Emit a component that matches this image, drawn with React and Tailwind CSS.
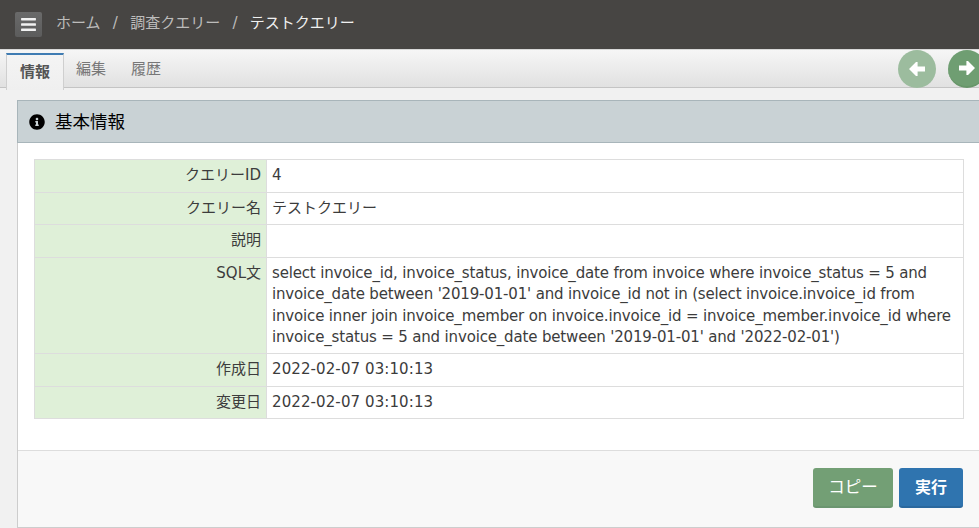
import React from "react";
import { FaBars, FaInfoCircle } from "react-icons/fa";

const rows = [
  ["クエリーID", "4", ""],
  ["クエリー名", "テストクエリー", ""],
  ["説明", "", ""],
  ["SQL文", "select invoice_id, invoice_status, invoice_date from invoice where invoice_status = 5 and invoice_date between '2019-01-01' and invoice_id not in (select invoice.invoice_id from invoice inner join invoice_member on invoice.invoice_id = invoice_member.invoice_id where invoice_status = 5 and invoice_date between '2019-01-01' and '2022-02-01')", "tracking-[-0.165px]"],
  ["作成日", "2022-02-07 03:10:13", "tracking-[0.1px]"],
  ["変更日", "2022-02-07 03:10:13", "tracking-[0.1px]"],
];

function Arrow({ flip }) {
  return (
    <svg width="16" height="14" viewBox="0 0 16 14" className={flip ? "rotate-180" : ""} fill="currentColor">
      <path d="M0 7 L7 0 L8.6 0 L8.6 4.4 L16 4.4 L16 9.6 L8.6 9.6 L8.6 14 L7 14 Z" />
    </svg>
  );
}

export default function App() {
  return (
    <div className="w-[979px] h-[528px] overflow-hidden bg-[#f1f1f1] text-[15px] leading-[1.42857] text-[#3c3c3c] font-['DejaVu_Sans','Noto_Sans_CJK_JP',sans-serif]">
      <header className="h-[49px] bg-[#474543] flex items-center pl-[15px]">
        <button className="w-[27px] h-[25px] rounded-[2px] bg-gradient-to-b from-[#6a6a6a] to-[#5c5c5c] flex items-center justify-center text-[#f2f2f2] text-[17px]">
          <FaBars />
        </button>
        <nav className="ml-[14px] -mt-[2px] flex items-center text-[#bdbcbb]">
          <span>ホーム</span>
          <span className="mx-[12.25px]">/</span>
          <span>調査クエリー</span>
          <span className="mx-[12.25px]">/</span>
          <span className="text-[#f0f0f0]">テストクエリー</span>
        </nav>
      </header>
      <div className="h-[39px] border-t border-t-[#d8d8d8] border-b border-b-[#c4c4c4] bg-gradient-to-b from-[#f6f6f6] to-[#e1e1e1] flex items-stretch pl-[6px]">
        <div className="w-[56px] h-[35px] mt-[3px] box-content border-t-[2px] border-t-[#3f7cb3] border-x border-x-[#cfcfcf] bg-gradient-to-b from-[#f4f4f4] to-[#efefef] flex items-center justify-center font-semibold text-[#555] -mb-[1px]">
          情報
        </div>
        <div className="flex items-center pt-[3px] text-[#777]">
          <span className="ml-[12px]">編集</span>
          <span className="ml-[25px]">履歴</span>
        </div>
        <div className="ml-auto -mr-[7px] flex items-start gap-[12px]">
          <div className="w-[38px] h-[38px] rounded-full bg-[#9cbc9e] flex items-center justify-center text-white">
            <Arrow />
          </div>
          <div className="w-[38px] h-[38px] rounded-full bg-[#6f9e72] border-b-[2px] border-b-[#679669] flex items-center justify-center text-white">
            <Arrow flip />
          </div>
        </div>
      </div>
      <section className="mt-[12px] ml-[17px] w-[964px] h-[428px] border border-[#cdcdcd] bg-white flex flex-col">
        <div className="h-[43px] shrink-0 bg-[#c9d2d5] border-b border-b-[#a8b5ba] -mx-[1px] -mt-[1px] border-t border-t-[#a8b5ba] border-l border-l-[#a8b5ba] flex items-center pl-[11px] text-black">
          <FaInfoCircle className="text-[16px]" />
          <h2 className="ml-[10px] pt-[1px] text-[17.5px] font-normal">基本情報</h2>
        </div>
        <div className="flex-1 pt-[16.4px] pl-[16px] pr-[16px]">
          <table className="w-[930px] border-collapse table-fixed border border-[#ddd]">
            <colgroup>
              <col className="w-[232px]" />
              <col />
            </colgroup>
            <tbody>
              {rows.map(([k, v, t]) => (
                <tr key={k}>
                  <th className="p-[5px] border border-[#ddd] bg-[#dff0d8] font-normal text-right align-top">{k}</th>
                  <td className={`p-[5px] border border-[#ddd] align-top ${t}`}>{v}</td>
                </tr>
              ))}
            </tbody>
          </table>
        </div>
        <div className="h-[77px] shrink-0 border-t border-t-[#ddd] bg-[#f8f8f8] flex items-start justify-end gap-[6px] pt-[17px] pr-[17px]">
          <button className="w-[80px] h-[40px] pt-[2px] rounded-[3px] bg-[#739f75] border-b-[2px] border-b-[#6b9670] text-white font-normal text-[16.5px]">コピー</button>
          <button className="w-[64px] h-[40px] pt-[2px] rounded-[3px] bg-[#2f74af] border-b-[2px] border-b-[#2a689e] text-white font-bold text-[16px]">実行</button>
        </div>
      </section>
    </div>
  );
}
